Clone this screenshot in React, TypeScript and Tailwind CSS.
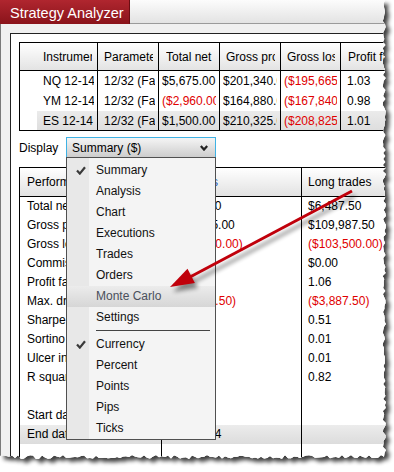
import React from "react";

type Pt = [number, number];

function tornPoints(): Pt[] {
  let s = 98765;
  const r = () => {
    s = (s * 16807) % 2147483647;
    return s / 2147483647;
  };
  const pts: Pt[] = [[0, 0]];
  for (let y = 0; y <= 454; y += 3) pts.push([382.5 + r() * 3.5, y]);
  for (let x = 384; x >= 0; x -= 3) pts.push([x, 455 + r() * 4]);
  pts.push([0, 457]);
  return pts;
}

const RED = "text-[#e00000]";

const instHeads = ["Instrument", "Parameters", "Total net profit", "Gross profit", "Gross loss", "Profit factor"];
const instW = ["w-[78px]", "w-[61px]", "w-[61px]", "w-[61px]", "w-[60px]", "w-[90px]"];
const instHPl = ["pl-[23px]", "pl-[6px]", "pl-[7px]", "pl-[6px]", "pl-[6px]", "pl-[7px]"];
const instDPl = ["pl-[6px]", "pl-[6px]", "pl-[3px]", "pl-[3px]", "pl-[3px]", "pl-[6px]"];

type Cell = [string, boolean];
const instRows: { cells: Cell[]; hl: boolean }[] = [
  {
    hl: false,
    cells: [
      ["NQ 12-14", false],
      ["12/32 (Fast)", false],
      ["$5,675.00", false],
      ["$201,340.00", false],
      ["($195,665.00)", true],
      ["1.03", false],
    ],
  },
  {
    hl: false,
    cells: [
      ["YM 12-14", false],
      ["12/32 (Fast)", false],
      ["($2,960.00)", true],
      ["$164,880.00", false],
      ["($167,840.00)", true],
      ["0.98", false],
    ],
  },
  {
    hl: true,
    cells: [
      ["ES 12-14", false],
      ["12/32 (Fast)", false],
      ["$1,500.00", false],
      ["$210,325.00", false],
      ["($208,825.00)", true],
      ["1.01", false],
    ],
  },
];

const labels = [
  "Total net profit",
  "Gross profit",
  "Gross loss",
  "Commission",
  "Profit factor",
  "Max. drawdown",
  "Sharpe ratio",
  "Sortino ratio",
  "Ulcer index",
  "R squared",
  "",
  "Start date",
  "End date",
];
const allVals: Cell[] = [
  ["$4,215.00", false],
  ["$576,545.00", false],
  ["($572,330.00)", true],
  ["$0.00", false],
  ["1.01", false],
  ["($10,462.50)", true],
  ["0.14", false],
  ["0.01", false],
  ["0.01", false],
  ["0.45", false],
  ["", false],
  ["9/1/2014", false],
  ["9/30/2014", false],
];
const longVals: Cell[] = [
  ["$6,487.50", false],
  ["$109,987.50", false],
  ["($103,500.00)", true],
  ["$0.00", false],
  ["1.06", false],
  ["($3,887.50)", true],
  ["0.51", false],
  ["0.01", false],
  ["0.01", false],
  ["0.82", false],
  ["", false],
  ["", false],
  ["", false],
];

function InstTable() {
  return (
    <div className="flex flex-col shrink-0">
      <div className="flex h-[29px] border-t border-b border-black bg-linear-to-b from-white to-[#e3e3e3]">
        {instHeads.map((h, i) => (
          <div key={i} className={`${instW[i]} ${instHPl[i]} shrink-0 border-l border-black pr-[5px] flex items-center`}>
            <div className="overflow-hidden whitespace-nowrap w-full">{h}</div>
          </div>
        ))}
      </div>
      {instRows.map((row, ri) => (
        <div key={ri} className={`flex ${ri === 2 ? "h-[20px] border-b border-black" : "h-[20px]"}`}>
          {row.cells.map(([t, red], ci) => (
            <div key={ci} className={`${instW[ci]} shrink-0 border-l border-black flex`}>
              <div
                className={`flex-1 min-w-0 ${ci === 0 ? "ml-[17px]" : ""} ${instDPl[ci]} pr-[3px] flex items-center ${
                  row.hl ? "bg-linear-to-b from-[#ebebeb] to-[#dedede]" : ""
                }`}
              >
                <div className={`overflow-hidden whitespace-nowrap w-full leading-[20px] ${red ? RED : ""}`}>{t}</div>
              </div>
            </div>
          ))}
        </div>
      ))}
    </div>
  );
}

function Check() {
  return (
    <svg width="10" height="9" viewBox="0 0 10 9">
      <path d="M1 4.6 L3.8 7.6 L9 1.2" fill="none" stroke="#3a3a3a" strokeWidth="2.2" />
    </svg>
  );
}

function MenuItem({ label, checked, hl }: { label: string; checked?: boolean; hl?: boolean }) {
  return (
    <div
      className={`relative h-[21px] leading-[21px] pl-[29px] whitespace-nowrap ${
        hl ? "bg-linear-to-b from-[#ececec] to-[#d6d6d6] text-[#4a505c]" : "text-[#111]"
      }`}
    >
      {checked && (
        <div className="absolute left-[9px] top-[6px] flex">
          <Check />
        </div>
      )}
      {label}
    </div>
  );
}

function Menu() {
  const a = ["Summary", "Analysis", "Chart", "Executions", "Trades", "Orders", "Monte Carlo", "Settings"];
  const b = ["Currency", "Percent", "Points", "Pips", "Ticks"];
  return (
    <div className="absolute left-0 top-[20px] z-20 w-[150px] border border-[#505050] pt-[2px] bg-[linear-gradient(to_right,#e8e8e8_0,#e8e8e8_22px,#f4f4f4_22px)]">
      {a.map((l) => (
        <MenuItem key={l} label={l} checked={l === "Summary"} hl={l === "Monte Carlo"} />
      ))}
      <div className="h-[6px] pt-[2px] pl-[29px] pr-[5px]">
        <div className="h-px bg-[#444]" />
      </div>
      {b.map((l) => (
        <MenuItem key={l} label={l} checked={l === "Currency"} />
      ))}
    </div>
  );
}

function DisplayRow() {
  return (
    <div className="flex items-center h-[21px] mt-[6px] shrink-0">
      <div className="w-[47px]">Display</div>
      <div className="relative w-[150px] h-[21px]">
        <div className="w-full h-full border border-[#3fb2e4] bg-linear-to-b from-[#f5f5f5] to-[#cdcdcd] flex items-center pl-[5px] pr-[7px]">
          <span className="flex-1">Summary ($)</span>
          <svg width="8" height="6" viewBox="0 0 8 6">
            <polyline points="0.8,1 4,4.6 7.2,1" fill="none" stroke="#222" strokeWidth="2.2" />
          </svg>
        </div>
        <Menu />
      </div>
    </div>
  );
}

function SumCol({ w, head, vals, blue, pl }: { w: string; head: string; vals: Cell[]; blue?: boolean; pl: string }) {
  return (
    <div className={`${w} shrink-0 flex flex-col border-l border-black`}>
      <div className={`h-[29px] border-b border-black bg-linear-to-b from-white to-[#e2e2e2] flex items-center ${pl} whitespace-nowrap overflow-hidden ${blue ? "text-[#1f5fc4]" : ""}`}>
        {head}
      </div>
      {vals.map(([t, red], i) => (
        <div
          key={i}
          className={`h-[19px] leading-[19px] ${pl} whitespace-nowrap overflow-hidden ${red ? RED : ""} ${
            i === 12 ? "bg-linear-to-b from-[#ececec] to-[#dcdcdc]" : ""
          }`}
        >
          {t}
        </div>
      ))}
    </div>
  );
}

function SummaryTable() {
  return (
    <div className="flex-1 flex border-t border-black mt-[9px] min-h-0">
      <SumCol w="w-[142px]" head="Performance" vals={labels.map((l) => [l, false] as Cell)} pl="pl-[7px]" />
      <SumCol w="w-[140px]" head="All trades" vals={allVals} blue pl="pl-[6px]" />
      <SumCol w="w-[120px]" head="Long trades" vals={longVals} pl="pl-[6px]" />
    </div>
  );
}

function Arrow() {
  return (
    <svg className="absolute inset-0 pointer-events-none z-30" width="394" height="472">
      <defs>
        <filter id="ash" x="-20%" y="-20%" width="140%" height="140%">
          <feGaussianBlur stdDeviation="2" />
        </filter>
      </defs>
      <g transform="translate(3,5)" filter="url(#ash)" opacity="0.45">
        <line x1="352" y1="191" x2="190" y2="277" stroke="#000" strokeWidth="3" />
        <polygon points="170,287 194.9,282.9 187.5,268.7" fill="#000" />
      </g>
      <line x1="352" y1="191" x2="190" y2="277" stroke="#c0000b" strokeWidth="3" />
      <polygon points="170,287 194.9,282.9 187.5,268.7" fill="#c0000b" />
    </svg>
  );
}

export default function App() {
  const pts = tornPoints();
  const poly = pts.map(([x, y]) => `${x.toFixed(1)}px ${y.toFixed(1)}px`).join(",");
  const svgPts = pts.map(([x, y]) => `${x.toFixed(1)},${y.toFixed(1)}`).join(" ");
  return (
    <div className="relative w-[394px] h-[472px] overflow-hidden bg-white font-['Liberation_Sans',Arial,sans-serif] text-[12px] text-black">
      <svg className="absolute inset-0" width="394" height="472">
        <defs>
          <filter id="sh" x="-10%" y="-10%" width="120%" height="120%">
            <feGaussianBlur stdDeviation="2.2" />
          </filter>
        </defs>
        <polygon points={svgPts} transform="translate(4,4)" fill="#000" opacity="0.75" filter="url(#sh)" />
      </svg>
      <div className="relative flex flex-col w-[394px] h-[472px] bg-white" style={{ clipPath: `polygon(${poly})` }}>
        <div className="flex h-[24px] shrink-0">
          <div className="w-[130px] h-full bg-linear-to-b from-[#b0262f] to-[#8a131a] text-white text-[14.5px] leading-[22px] pt-[2px] pl-[10px] border-r border-[#6a0d12] whitespace-nowrap">
            Strategy Analyzer
          </div>
          <div className="flex-1 h-full bg-linear-to-b from-[#fcfcfc] to-[#e3e3e3] border-b border-[#9a9a9a]" />
        </div>
        <div className="flex-1 flex flex-col border-l border-[#7a7a7a] bg-[#f0f0f0] pt-[9px] pl-[9px] min-h-0">
          <div className="flex-1 flex flex-col border-t border-l border-[#222] bg-white pt-[8px] pl-[8px] overflow-hidden min-h-0">
            <InstTable />
            <DisplayRow />
            <SummaryTable />
          </div>
        </div>
      </div>
      <Arrow />
    </div>
  );
}
